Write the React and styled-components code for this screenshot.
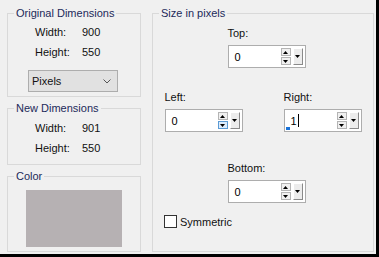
import React from 'react';
import styled, { createGlobalStyle } from 'styled-components';

const Global = createGlobalStyle`
    body {
        margin: 0;
        font-family: "Liberation Sans", Arial, sans-serif;
        font-size: 11px;
        color: #111;
    }
`

const Dialog = styled.div`
    width: 379px;
    height: 257px;
    box-sizing: border-box;
    border-right: 3px solid #000;
    border-bottom: 3px solid #000;
    background: #f0f0f0;
    padding: 7px 2px 0 7px;
    display: grid;
    grid-template-columns: 134px 222px;
    column-gap: 11px;
    align-items: start;
`

const Column = styled.div`
    display: flex;
    flex-direction: column;
    gap: 5px;
`

const Group = styled.fieldset`
    margin: 0;
    padding: 0;
    min-width: 0;
    box-sizing: border-box;
    height: ${p => p.$h}px;
    border: 1px solid #d9d9d9;
`

const Legend = styled.legend`
    margin-left: 6px;
    padding: 0 2px;
    line-height: 13px;
    font-size: 11px;
    color: #1c2a5a;
`

const InfoGrid = styled.div`
    display: grid;
    grid-template-columns: 47px auto;
    grid-auto-rows: 20px;
    align-items: center;
    padding: ${p => p.$top}px 0 0 27px;
`

const Select = styled.div`
    margin: 8px 0 0 20px;
    width: 90px;
    height: 22px;
    box-sizing: border-box;
    border: 1px solid #adadad;
    background: #e1e1e1;
    display: flex;
    align-items: center;
    justify-content: space-between;
    padding: 0 6px 0 3px;
`

const Swatch = styled.div`
    margin: 7px 0 0 18px;
    width: 96px;
    height: 57px;
    background: #b6b1b3;
`

const SizeBody = styled.div`
    display: flex;
    flex-direction: column;
    align-items: center;
    padding: 6px 0 0 0;
`

const Field = styled.div`
    display: flex;
    flex-direction: column;
    gap: 5px;
    margin-left: ${p => p.$shift || 0}px;
    margin-top: ${p => p.$mt || 0}px;
`

const Label = styled.div`
    line-height: 14px;
`

const Pair = styled.div`
    display: flex;
    gap: 41px;
    margin-top: 22px;
`

const Spin = styled.div`
    position: relative;
    width: 78px;
    height: 23px;
    box-sizing: border-box;
    border: 1px solid #adadad;
    background: #fff;
    display: flex;
    align-items: center;
    padding: 0 2px 0 6px;
`

const Value = styled.div`
    flex: 1;
    display: flex;
    align-items: center;
    color: #000;
`

const Caret = styled.span`
    display: inline-block;
    width: 1px;
    height: 13px;
    background: #000;
    margin-left: 1px;
`

const Marker = styled.span`
    position: absolute;
    left: 1px;
    bottom: 1px;
    width: 4px;
    height: 3px;
    background: #1a73d9;
`

const Arrows = styled.div`
    display: flex;
    flex-direction: column;
    gap: 1px;
    margin-right: 2px;
`

const ArrowBtn = styled.div`
    width: 10px;
    height: 8px;
    box-sizing: border-box;
    border: 1px solid ${p => p.$hot ? '#5b9bd5' : '#b4b4b4'};
    background: ${p => p.$hot ? '#dcecfc' : '#f0f0f0'};
    display: flex;
    align-items: center;
    justify-content: center;
`

const Drop = styled.div`
    width: 10px;
    height: 17px;
    box-sizing: border-box;
    border-top: 1px solid #fff;
    border-left: 1px solid #fff;
    border-right: 1px solid #8a8a8a;
    border-bottom: 1px solid #8a8a8a;
    background: #ececec;
    display: flex;
    align-items: center;
    justify-content: center;
`

const Check = styled.div`
    display: flex;
    align-items: center;
    gap: 3px;
    align-self: flex-start;
    margin: 12px 0 0 11px;
`

const Box = styled.div`
    width: 13px;
    height: 13px;
    box-sizing: border-box;
    border: 1px solid #333;
    background: #fff;
`

function Tri({ down }) {
    return (
        <svg width="5" height="3" viewBox="0 0 5 3">
            <path d={down ? 'M0 0h5L2.5 3z' : 'M0 3h5L2.5 0z'} fill="#000" />
        </svg>
    )
}

function Spinner({ value, hot, caret }) {
    return (
        <Spin>
            <Value>{value}{caret && <Caret />}</Value>
            {caret && <Marker />}
            <Arrows>
                <ArrowBtn><Tri /></ArrowBtn>
                <ArrowBtn $hot={hot}><Tri down /></ArrowBtn>
            </Arrows>
            <Drop><Tri down /></Drop>
        </Spin>
    )
}

export default function App() {
    return (
        <>
            <Global />
            <Dialog>
                <Column>
                    <Group $h={90}>
                        <Legend>Original Dimensions</Legend>
                        <InfoGrid $top={2}>
                            <span>Width:</span><span>900</span>
                            <span>Height:</span><span>550</span>
                        </InfoGrid>
                        <Select>
                            <span>Pixels</span>
                            <svg width="8" height="5" viewBox="0 0 8 5">
                                <path d="M0.5 0.5L4 4L7.5 0.5" fill="none" stroke="#555" strokeWidth="1" />
                            </svg>
                        </Select>
                    </Group>
                    <Group $h={63}>
                        <Legend>New Dimensions</Legend>
                        <InfoGrid $top={3}>
                            <span>Width:</span><span>901</span>
                            <span>Height:</span><span>550</span>
                        </InfoGrid>
                    </Group>
                    <Group $h={82}>
                        <Legend>Color</Legend>
                        <Swatch />
                    </Group>
                </Column>

                <Group $h={245}>
                    <Legend>Size in pixels</Legend>
                    <SizeBody>
                        <Field $shift={7}>
                            <Label>Top:</Label>
                            <Spinner value="0" />
                        </Field>
                        <Pair>
                            <Field>
                                <Label>Left:</Label>
                                <Spinner value="0" hot />
                            </Field>
                            <Field>
                                <Label>Right:</Label>
                                <Spinner value="1" caret />
                            </Field>
                        </Pair>
                        <Field $shift={7} $mt={29}>
                            <Label>Bottom:</Label>
                            <Spinner value="0" />
                        </Field>
                        <Check>
                            <Box />
                            <span>Symmetric</span>
                        </Check>
                    </SizeBody>
                </Group>
            </Dialog>
        </>
    )
}
